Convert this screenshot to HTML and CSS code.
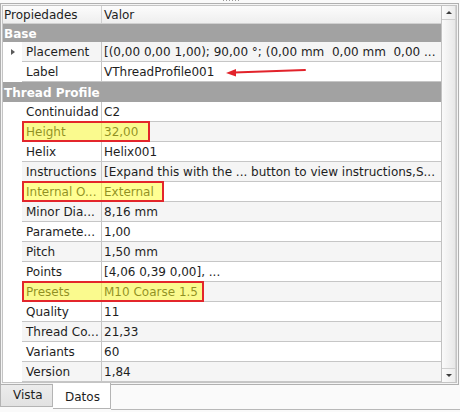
FILE: index.html
```html
<!DOCTYPE html>
<html>
<head>
<meta charset="utf-8">
<link rel="stylesheet" href="styles.css">
</head>
<body>
<div class="grip"><i></i><i></i><i></i><i></i><i></i><i></i></div>
<div class="pane">
  <div class="view">
    <div class="tree">
      <div class="header">
        <div class="hname">Propiedades</div>
        <div class="hvalue">Valor</div>
      </div>
      <div class="group first">Base</div>
      <div class="row alt">
        <div class="branch"><span class="expander"></span></div>
        <div class="cells"><div class="name">Placement</div><div class="value">[(0,00 0,00 1,00); 90,00 °; (0,00 mm  0,00 mm  0,00 ...</div></div>
      </div>
      <div class="row">
        <div class="branch"></div>
        <div class="cells"><div class="name">Label</div><div class="value">VThreadProfile001</div></div>
        <svg class="arrow" width="90" height="16" viewBox="0 0 90 16">
          <line x1="11" y1="10.6" x2="82" y2="8" stroke="#e2232b" stroke-width="2" stroke-linecap="round"/>
          <polygon points="3,11 13,7 13,14.5" fill="#e2232b"/>
        </svg>
      </div>
      <div class="group">Thread Profile</div>
      <div class="row">
        <div class="branch"></div>
        <div class="cells"><div class="name">Continuidad</div><div class="value">C2</div></div>
      </div>
      <div class="row alt">
        <div class="branch"></div>
        <div class="cells"><div class="name">Height</div><div class="value">32,00</div></div>
        <div class="mark" style="width:128px"></div>
      </div>
      <div class="row">
        <div class="branch"></div>
        <div class="cells"><div class="name">Helix</div><div class="value">Helix001</div></div>
      </div>
      <div class="row alt">
        <div class="branch"></div>
        <div class="cells"><div class="name">Instructions</div><div class="value">[Expand this with the ... button to view instructions,S...</div></div>
      </div>
      <div class="row">
        <div class="branch"></div>
        <div class="cells"><div class="name">Internal O...</div><div class="value">External</div></div>
        <div class="mark" style="width:142px"></div>
      </div>
      <div class="row alt">
        <div class="branch"></div>
        <div class="cells"><div class="name">Minor Dia...</div><div class="value">8,16 mm</div></div>
      </div>
      <div class="row">
        <div class="branch"></div>
        <div class="cells"><div class="name">Paramete...</div><div class="value">1,00</div></div>
      </div>
      <div class="row alt">
        <div class="branch"></div>
        <div class="cells"><div class="name">Pitch</div><div class="value">1,50 mm</div></div>
      </div>
      <div class="row">
        <div class="branch"></div>
        <div class="cells"><div class="name">Points</div><div class="value">[4,06 0,39 0,00], ...</div></div>
      </div>
      <div class="row alt">
        <div class="branch"></div>
        <div class="cells"><div class="name">Presets</div><div class="value">M10 Coarse 1.5</div></div>
        <div class="mark" style="width:182px"></div>
      </div>
      <div class="row">
        <div class="branch"></div>
        <div class="cells"><div class="name">Quality</div><div class="value">11</div></div>
      </div>
      <div class="row alt">
        <div class="branch"></div>
        <div class="cells"><div class="name">Thread Co...</div><div class="value">21,33</div></div>
      </div>
      <div class="row">
        <div class="branch"></div>
        <div class="cells"><div class="name">Variants</div><div class="value">60</div></div>
      </div>
      <div class="row alt">
        <div class="branch"></div>
        <div class="cells"><div class="name">Version</div><div class="value">1,84</div></div>
      </div>
    </div>
    <div class="scrollbar">
      <div class="sbtn"><span class="up"></span></div>
      <div class="thumb"></div>
      <div class="sbtn down-btn"><span class="down"></span></div>
    </div>
  </div>
</div>
<div class="tabs">
  <div class="tab vista">Vista</div>
  <div class="tab datos">Datos</div>
  <div class="tabfill"></div>
</div>
</body>
</html>
```
FILE: styles.css
```css
* { box-sizing: border-box; }
html, body { margin: 0; padding: 0; }
body {
  width: 460px;
  height: 412px;
  overflow: hidden;
  background: #fafafa;
  font-family: "DejaVu Sans", sans-serif;
  font-size: 12px;
  color: #1e1e1e;
}
.grip {
  height: 3px;
  display: flex;
  justify-content: center;
  gap: 2px;
  padding-left: 1px;
}
.grip i {
  width: 1px;
  height: 1px;
  background: #9a9a9a;
}
.pane {
  width: 459px;
  border: 1px solid #b0b0b0;
  padding: 1px;
  background: #f4f4f4;
}
.view {
  display: flex;
  border: 1px solid #c4c4c4;
  background: #fff;
}
.tree {
  width: 439px;
  border-right: 1px solid #c2c2c2;
}
.header {
  display: flex;
  height: 18px;
  background: linear-gradient(#fcfcfc, #eeeeee);
  border-bottom: 1px solid #d0d0d0;
  padding-top: 2px;
  line-height: 15px;
}
.hname {
  width: 99px;
  padding-left: 1px;
  border-right: 1px solid #d0d0d0;
  margin-top: -2px;
  padding-top: 2px;
}
.hvalue {
  padding-left: 2px;
}
.group {
  height: 20px;
  padding-top: 2px;
  line-height: 18px;
  background: #a2a2a2;
  color: #fff;
  font-weight: bold;
  padding-left: 1px;
}
.group.first {
  height: 18px;
  line-height: 16px;
}
.row {
  position: relative;
  display: flex;
  height: 20px;
}
.branch {
  width: 19px;
  background: #fff;
  display: flex;
  align-items: center;
  justify-content: center;
}
.expander {
  width: 0;
  height: 0;
  border-left: 4px solid #5a5a5a;
  border-top: 3.5px solid transparent;
  border-bottom: 3.5px solid transparent;
  margin-left: 1px;
}
.cells {
  flex: 1;
  display: flex;
  border-bottom: 1px solid #c6c6c6;
  line-height: 17px;
  background: #fff;
}
.row.alt .cells {
  background: #f5f5f5;
}
.name {
  width: 80px;
  padding-left: 4px;
  padding-top: 2px;
  border-right: 1px solid #c6c6c6;
  white-space: nowrap;
  overflow: hidden;
}
.value {
  flex: 1;
  padding-left: 2px;
  padding-top: 2px;
  white-space: pre;
  overflow: hidden;
}
.mark {
  position: absolute;
  left: 19px;
  top: -1px;
  height: 21px;
  border: 2px solid #e3262b;
  background: rgba(255, 255, 40, 0.5);
}
.arrow {
  position: absolute;
  left: 220px;
  top: 0;
}
.scrollbar {
  width: 14px;
  display: flex;
  flex-direction: column;
  background: #ececec;
}
.sbtn {
  height: 14px;
  display: flex;
  align-items: center;
  justify-content: center;
  background: linear-gradient(90deg, #fbfbfb, #ececec);
  border-bottom: 1px solid #cfcfcf;
  border-right: 1px solid #d4d4d4;
}
.down-btn {
  border-bottom: none;
  border-top: 1px solid #cfcfcf;
}
.up {
  width: 0;
  height: 0;
  border-bottom: 3px solid #3c3c3c;
  border-left: 3px solid transparent;
  border-right: 3px solid transparent;
}
.down {
  width: 0;
  height: 0;
  border-top: 3px solid #3c3c3c;
  border-left: 3px solid transparent;
  border-right: 3px solid transparent;
}
.thumb {
  flex: 1;
  background: linear-gradient(90deg, #fafafa, #e8e8e8);
  border-right: 1px solid #d4d4d4;
}
.tabs {
  display: flex;
  height: 27px;
}
.tab {
  padding: 0 12px;
}
.vista {
  height: 22px;
  width: 53px;
  padding-top: 1px;
  line-height: 18px;
  background: linear-gradient(#ececec, #e2e2e2);
  border: 1px solid #b4b4b4;
  border-top: none;
}
.datos {
  margin-top: -2px;
  height: 26px;
  width: 58px;
  padding-top: 1px;
  line-height: 26px;
  background: #fff;
  border: 1px solid #b4b4b4;
  border-top: none;
  border-left: none;
}
.tabfill {
  flex: 1;
  height: 25px;
  border-bottom: 1px solid #b8b8b8;
  background: #fafafa;
}
```
